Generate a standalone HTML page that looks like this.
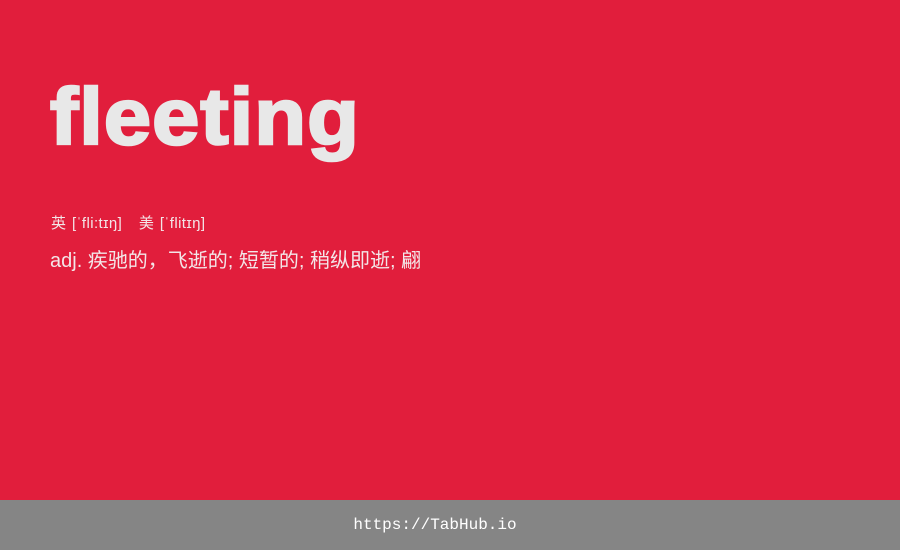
<!DOCTYPE html>
<html><head><meta charset="utf-8"><style>
html,body{margin:0;padding:0;width:900px;height:550px;overflow:hidden;background:#e11e3c;font-family:"Liberation Sans","Noto Sans CJK SC",sans-serif;position:relative;}
.w{position:absolute;left:50px;top:67px;font-size:80px;font-weight:bold;color:#e8e8e8;line-height:100px;transform:scaleX(1.06);transform-origin:left top;-webkit-text-stroke:2.5px #e8e8e8;letter-spacing:1px;}
.p{position:absolute;left:51px;top:212px;font-size:15px;color:#f3e6e8;letter-spacing:0.4px;word-spacing:1px;}
.d{position:absolute;left:50px;top:244px;font-size:20px;color:#f3e6e8;}
.f{position:absolute;left:0;bottom:0;width:870px;height:50px;background:#858585;color:#fff;font-family:"Liberation Mono",monospace;font-size:16px;text-align:center;line-height:50px;padding-right:30px;}
</style></head><body>
<div class="w">fleeting</div>
<div class="p">英 [ˈfli:tɪŋ] &nbsp;&nbsp;美 [ˈflitɪŋ]</div>
<div class="d">adj. 疾驰的，飞逝的; 短暂的; 稍纵即逝; 翩</div>
<div class="f">https://TabHub.io</div>
</body></html>
